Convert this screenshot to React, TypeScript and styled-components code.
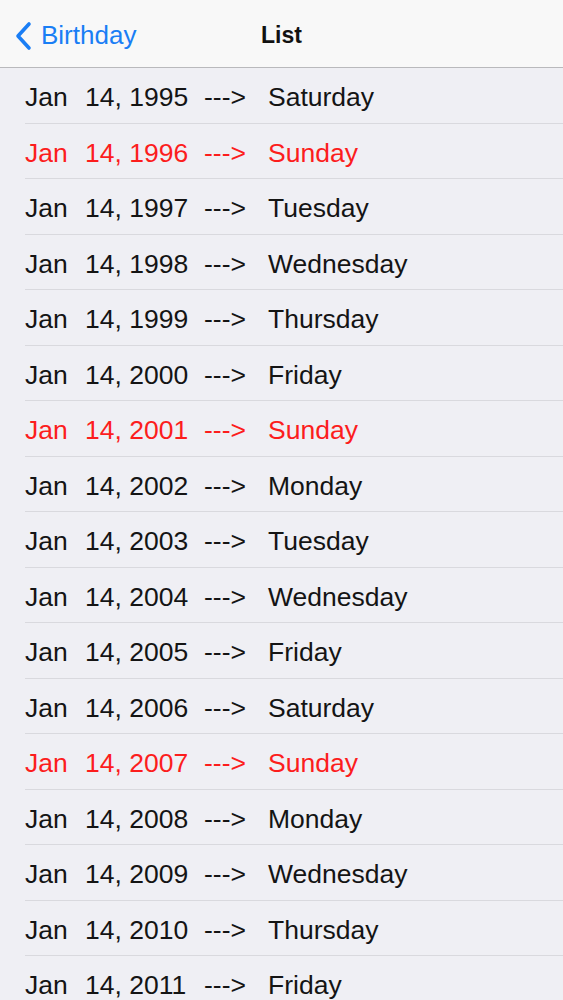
import React from 'react';
import styled, { createGlobalStyle } from 'styled-components';

const GlobalStyle = createGlobalStyle`
  html, body {
    margin: 0;
    padding: 0;
    background: #efeff4;
    font-family: "Liberation Sans", Arial, sans-serif;
    overflow: hidden;
  }
`;

const WEEKDAYS = ['Sunday', 'Monday', 'Tuesday', 'Wednesday', 'Thursday', 'Friday', 'Saturday'];

const ROWS = Array.from({ length: 17 }, (_, i) => {
  const year = 1995 + i;
  const day = WEEKDAYS[new Date(year, 0, 14).getDay()];
  return { year, day, weekend: day === 'Sunday' };
});

const Screen = styled.div`
  width: 563px;
  height: 1000px;
  overflow: hidden;
  background: #efeff4;
`;

const NavBar = styled.header`
  height: 68px;
  box-sizing: border-box;
  border-bottom: 1px solid #b9b9bc;
  background: #f8f8f8;
  display: grid;
  grid-template-columns: 1fr auto 1fr;
  align-items: center;
  padding-top: 4px;
`;

const BackButton = styled.div`
  display: flex;
  align-items: center;
  gap: 9px;
  padding-left: 14px;
  color: #1a7ef5;
  font-size: 26px;
`;

const Title = styled.h1`
  margin: 0;
  font-size: 23px;
  font-weight: 700;
  color: #111;
`;

const List = styled.ul`
  list-style: none;
  margin: 0;
  padding: 0 0 0 25px;
`;

const Row = styled.li<{ $red: boolean }>`
  height: 55.5px;
  box-sizing: border-box;
  display: flex;
  align-items: center;
  border-bottom: 1px solid #d9d9de;
  color: ${p => (p.$red ? '#fc1d1d' : '#141414')};
  font-size: 26.5px;
  padding-top: 5px;
  white-space: pre;
`;

const Month = styled.span`
  width: 60px;
`;

const DateText = styled.span`
  width: 119px;
`;

const Arrow = styled.span`
  width: 64px;
`;

const Chevron = () => (
  <svg width="18" height="30" viewBox="0 0 18 30">
    <path d="M15 3 L4 15 L15 27" fill="none" stroke="#1a7ef5" strokeWidth="3.6" strokeLinecap="round" strokeLinejoin="round" />
  </svg>
);

export default function App() {
  return (
    <Screen>
      <GlobalStyle />
      <NavBar>
        <BackButton>
          <Chevron />
          <span>Birthday</span>
        </BackButton>
        <Title>List</Title>
        <div />
      </NavBar>
      <List>
        {ROWS.map(r => (
          <Row key={r.year} $red={r.weekend}>
            <Month>Jan</Month>
            <DateText>{`14, ${r.year}`}</DateText>
            <Arrow>---&gt;</Arrow>
            <span>{r.day}</span>
          </Row>
        ))}
      </List>
    </Screen>
  );
}
